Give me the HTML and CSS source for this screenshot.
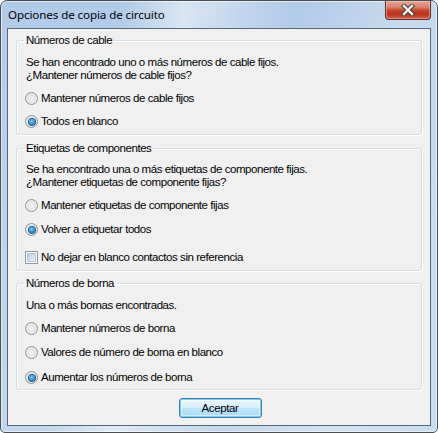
FILE: index.html
```html
<!DOCTYPE html>
<html lang="es">
<head>
<meta charset="utf-8">
<title>Opciones de copia de circuito</title>
<link rel="stylesheet" href="styles.css">
</head>
<body>
<div class="window">
  <div class="titlebar">
    <span class="title">Opciones de copia de circuito</span>
    <button class="close" aria-label="Cerrar">
      <svg width="14" height="12" viewBox="0 0 14 12">
        <path d="M3 2 L11 10 M11 2 L3 10" stroke="#3b3b3b" stroke-width="4.4" stroke-linecap="square" fill="none"/>
        <path d="M3 2 L11 10 M11 2 L3 10" stroke="#ffffff" stroke-width="2.4" stroke-linecap="square" fill="none"/>
      </svg>
    </button>
  </div>
  <div class="client">
    <fieldset class="group g1">
      <legend>Números de cable</legend>
      <p class="msg">Se han encontrado uno o más números de cable fijos.<br>¿Mantener números de cable fijos?</p>
      <label class="opt m10"><span class="radio"></span>Mantener números de cable fijos</label>
      <label class="opt m10"><span class="radio on"><span class="dot"></span></span>Todos en blanco</label>
    </fieldset>
    <fieldset class="group g2">
      <legend>Etiquetas de componentes</legend>
      <p class="msg">Se ha encontrado una o más etiquetas de componente fijas.<br>¿Mantener etiquetas de componente fijas?</p>
      <label class="opt m10"><span class="radio"></span>Mantener etiquetas de componente fijas</label>
      <label class="opt m11"><span class="radio on"><span class="dot"></span></span>Volver a etiquetar todos</label>
      <label class="opt m15"><span class="check"><span class="check-in"></span></span>No dejar en blanco contactos sin referencia</label>
    </fieldset>
    <fieldset class="group g3">
      <legend>Números de borna</legend>
      <p class="msg">Una o más bornas encontradas.</p>
      <label class="opt m10"><span class="radio"></span>Mantener números de borna</label>
      <label class="opt m11"><span class="radio"></span>Valores de número de borna en blanco</label>
      <label class="opt m12"><span class="radio on"><span class="dot"></span></span>Aumentar los números de borna</label>
    </fieldset>
    <div class="actions">
      <button class="btn">Aceptar</button>
    </div>
  </div>
</div>
</body>
</html>
```

FILE: styles.css
```css
* { box-sizing: border-box; }
html, body {
  margin: 0;
  padding: 0;
  background: #ffffff;
}
body {
  width: 438px;
  height: 433px;
  overflow: hidden;
  font-family: "Liberation Sans", Arial, sans-serif;
  font-size: 11.5px;
  letter-spacing: -0.45px;
  color: #000;
}
.window {
  width: 438px;
  height: 433px;
  border: 1px solid #4b4f55;
  border-radius: 7px 7px 5px 5px;
  padding: 0 6px 6px;
  display: flex;
  flex-direction: column;
  background:
    linear-gradient(100deg, rgba(255,255,255,0) 0%, rgba(255,255,255,0) 24%, rgba(255,255,255,0.5) 36%, rgba(255,255,255,0.2) 48%, rgba(255,255,255,0) 58%, rgba(255,255,255,0.3) 80%, rgba(255,255,255,0.1) 100%),
    linear-gradient(180deg, #b0cbe8 0%, #bad2ec 40%, #c3d8ee 100%);
  box-shadow: inset 0 0 0 1px rgba(255,255,255,0.55);
}
.titlebar {
  height: 27px;
  display: flex;
  align-items: flex-start;
  justify-content: space-between;
}
.title {
  font-family: "Noto Sans", "Open Sans", sans-serif;
  font-size: 11.6px;
  line-height: 16px;
  margin-top: 6px;
  padding-left: 1px;
  color: #000;
  letter-spacing: -0.1px;
}
.close {
  width: 46px;
  height: 19px;
  margin: 0;
  padding: 0;
  border: 1px solid #5d2e28;
  border-top: none;
  border-radius: 0 0 4px 4px;
  background:
    linear-gradient(180deg, #e7a592 0%, #d9826c 35%, #c4452f 52%, #b9321d 72%, #cf5f46 100%);
  box-shadow: inset 0 0 0 1px rgba(255,215,200,0.45);
  display: flex;
  align-items: center;
  justify-content: center;
}
.close svg { display: block; }
.client {
  flex: 1;
  border: 1px solid #56687c;
  background: #f0f0f0;
  padding: 0 8px;
  display: flex;
  flex-direction: column;
}
.group {
  margin: 0;
  padding: 0 9px;
  border: 1px solid #d5dfe5;
  border-radius: 3px;
  box-shadow: inset 1px 1px 0 #ffffff, 1px 1px 0 #ffffff;
  display: flex;
  flex-direction: column;
  min-width: 0;
}
.group legend {
  padding: 0 2px;
  margin-left: -2px;
  line-height: 13px;
  font-size: 11.5px;
}
.g1 { margin-top: 5px; padding-bottom: 6px; }
.g2 { margin-top: 7px; padding-bottom: 6px; }
.g3 { margin-top: 6px; padding-bottom: 5px; }
.g1 .msg { margin-top: 9px; }
.g2 .msg { margin-top: 8px; }
.g3 .msg { margin-top: 9px; }
.msg {
  margin: 0;
  line-height: 13px;
}
.opt {
  display: flex;
  align-items: center;
  height: 13px;
  line-height: 13px;
  margin-left: -1px;
}
.m10 { margin-top: 10px; }
.m11 { margin-top: 11px; }
.m12 { margin-top: 12px; }
.m15 { margin-top: 15px; }
.radio {
  width: 13px;
  height: 13px;
  flex: none;
  border-radius: 50%;
  border: 1px solid #8e8f8f;
  background: radial-gradient(circle at 50% 55%, #f4f4f4 0%, #e4e4e4 45%, #cfcfcf 100%);
  box-shadow: inset 0 0 0 1px rgba(255,255,255,0.6);
  margin-right: 3px;
  display: flex;
  align-items: center;
  justify-content: center;
}
.radio.on {
  background: radial-gradient(circle at 50% 50%, #e8eef3 0%, #dde3ea 60%, #cfd5dc 100%);
}
.dot {
  width: 6px;
  height: 6px;
  border-radius: 50%;
  background: radial-gradient(circle at 45% 40%, #9fdcfb 0%, #3b9ad6 40%, #0f4f8c 100%);
  box-shadow: 0 0 0 1px #1d5f99;
}
.check {
  width: 13px;
  height: 13px;
  flex: none;
  border: 1px solid #8e9aa6;
  background: #ffffff;
  padding: 1px;
  margin-right: 3px;
}
.check-in {
  display: block;
  width: 100%;
  height: 100%;
  border: 1px solid #b3c6d9;
  background: linear-gradient(135deg, #b9cfe7 0%, #d3e2f2 55%, #eaf2fa 100%);
}
.actions {
  margin-top: 8px;
  display: flex;
  justify-content: center;
}
.btn {
  width: 83px;
  height: 20px;
  margin: 0 0 0 2px;
  padding: 0;
  font-family: "Liberation Sans", Arial, sans-serif;
  font-size: 11.5px;
  letter-spacing: -0.4px;
  color: #000;
  border: 1px solid #3c7fb1;
  border-radius: 3px;
  background: linear-gradient(180deg, #eaf6fd 0%, #d9f0fc 48%, #bee6fd 52%, #a7d9f5 100%);
  box-shadow: inset 0 0 0 1px #7fcbef, inset 0 0 0 2px rgba(255,255,255,0.5);
}
```
